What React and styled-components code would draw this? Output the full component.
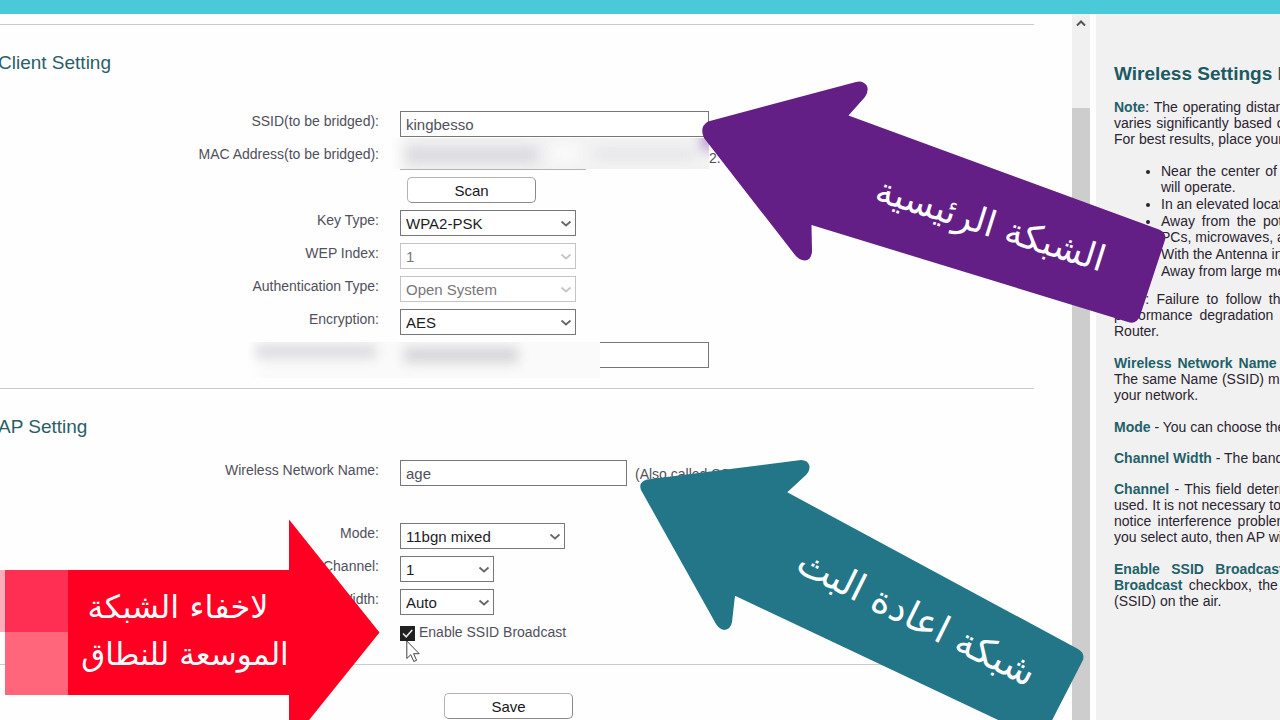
import React from 'react';
import styled, { createGlobalStyle } from 'styled-components';

const GlobalStyle = createGlobalStyle`
  * {
    box-sizing: border-box;
  }

  body {
    margin: 0;
    overflow: hidden;
    background: #fefefe;
    color: #50505c;
    font-family: "Liberation Sans", Arial, sans-serif;
    font-size: 14px;
    line-height: 20px;
  }
`;

const Page = styled.div`
  position: relative;
  display: flex;
  flex-direction: column;
  height: 100vh;
  overflow: hidden;
`;

const TopBar = styled.header`
  flex: none;
  height: 14px;
  background: #4ac9d8;
`;

const Frames = styled.div`
  display: flex;
  flex: 1;
  min-height: 0;
`;

const Content = styled.main`
  flex: 1;
  min-width: 0;
  margin-left: -2px;
  padding: 10px 38px 0 0;
`;

const Rule = styled.hr`
  height: 1px;
  margin: 0;
  border: 0;
  background: #cbcbcb;
`;

const Heading = styled.h2`
  margin: 0;
  padding-top: 26px;
  padding-bottom: ${({ $gap }) => $gap}px;
  color: #2a5f66;
  font-size: 19px;
  font-weight: normal;
  line-height: 24px;
`;

const Row = styled.div`
  position: relative;
  display: grid;
  grid-template-columns: 381px 1fr;
  column-gap: 21px;
  min-height: 33px;
  margin-bottom: ${({ $space }) => $space || 0}px;
`;

const Label = styled.label`
  text-align: right;
`;

const Field = styled.div`
  display: flex;
  align-items: flex-start;
`;

const TextInput = styled.input`
  width: ${({ $width }) => $width}px;
  height: 26px;
  padding: 0 5px;
  border: 1px solid ${({ $soft }) => ($soft ? '#b4b4b4' : '#777')};
  border-radius: 0;
  background: #fff;
  color: #50505c;
  font-family: inherit;
  font-size: 15px;
`;

const SelectBox = styled.div`
  position: relative;
  width: ${({ $width }) => $width}px;
  color: #666;

  select {
    width: 100%;
    height: 26px;
    padding: 0 22px 0 5px;
    appearance: none;
    border: 1px solid #777;
    border-radius: 0;
    background: #fff;
    color: #1c1c24;
    font-family: inherit;
    font-size: 15px;
  }

  select:disabled {
    border-color: #c4c4c4;
    color: #777;
    opacity: 1;
  }

  select:disabled + svg {
    color: #c4c4c4;
  }

  svg {
    position: absolute;
    top: 10px;
    right: 4px;
    pointer-events: none;
  }
`;

const Button = styled.button`
  width: 129px;
  height: 26px;
  margin-left: ${({ $indent }) => $indent}px;
  border: 1px solid #b4b4b4;
  border-right-color: #8a8a8a;
  border-bottom-color: #8a8a8a;
  border-radius: 5px;
  background: #fff;
  color: #16161c;
  font-family: inherit;
  font-size: 15px;
`;

const Hint = styled.span`
  padding-left: ${({ $gap }) => $gap || 8}px;
  line-height: 28px;
`;

const CheckBox = styled.span`
  position: relative;
  display: flex;
  padding-top: 4px;
  margin-right: 4px;

  input {
    width: 15px;
    height: 15px;
    margin: 0;
    appearance: none;
    background: #e8e8e8;
  }

  input:checked {
    background: #202020;
  }

  svg {
    position: absolute;
    top: 4px;
    left: 0;
    pointer-events: none;
  }
`;

const Redaction = styled.div`
  position: absolute;
  top: ${({ $top }) => $top}px;
  left: ${({ $left }) => $left}px;
  width: ${({ $width }) => $width}px;
  height: ${({ $height }) => $height}px;
  overflow: hidden;
  background: ${({ $background }) => $background};
`;

const Smudge = styled.span`
  position: absolute;
  top: ${({ $top }) => $top}px;
  left: ${({ $left }) => $left}px;
  width: ${({ $width }) => $width}px;
  height: ${({ $height }) => $height}px;
  background: ${({ $color }) => $color};
  filter: blur(6px);
`;

const Actions = styled.div`
  padding: 28px 0 0 446px;
`;

const ScrollBar = styled.div`
  display: flex;
  flex: none;
  flex-direction: column;
  width: 18px;
  background: #f0f0f0;
`;

const ScrollUp = styled.button`
  height: 17px;
  padding: 0;
  margin-bottom: 77px;
  border: 0;
  background: none;
  color: #555;
  line-height: 0;
`;

const ScrollThumb = styled.div`
  flex: 1;
  background: #cdcdcd;
`;

const Help = styled.aside`
  flex: none;
  width: 184px;
  margin-left: 6px;
  padding: 47px 0 0 18px;
  overflow: hidden;
  background: #f1f1f1;
  color: #2a2430;
`;

const HelpBody = styled.div`
  width: 419px;
  line-height: 16px;
  text-align: justify;

  h1 {
    margin: 0 0 13px;
    color: #1b5a63;
    font-size: 19px;
    line-height: 25px;
  }

  p {
    margin: 0 0 16px;
  }

  b {
    color: #1f6169;
  }

  ul {
    margin: 0 0 12px;
    padding-left: 47px;
  }

  li {
    margin-bottom: 1px;
  }
`;

const Tight = styled.p`
  && {
    margin-bottom: 15px;
  }
`;

const Annotation = styled.svg`
  position: absolute;
  top: ${({ $top }) => $top}px;
  left: ${({ $left }) => $left}px;
  overflow: visible;
  pointer-events: none;

  text {
    fill: #fff;
    font-family: "DejaVu Sans", sans-serif;
    text-anchor: middle;
    direction: rtl;
  }
`;

function Chevron({ up }) {
  return (
    <svg width="12" height="8" viewBox="0 0 12 8" fill="none" stroke="currentColor" strokeWidth={up ? 2 : 1.7}>
      <path d={up ? 'M2 6.5 6 2.5l4 4' : 'M1.5 1.5 6 5.5l4.5-4'} />
    </svg>
  );
}

function SelectRow({ id, label, value, width, disabled }) {
  return (
    <Row>
      <Label htmlFor={id}>{label}</Label>
      <Field>
        <SelectBox $width={width}>
          <select id={id} defaultValue={value} disabled={disabled}>
            <option>{value}</option>
          </select>
          <Chevron />
        </SelectBox>
      </Field>
    </Row>
  );
}

function ClientSetting() {
  return (
    <section>
      <Rule />
      <Heading $gap={36}>Client Setting</Heading>
      <Row>
        <Label htmlFor="ssid">SSID(to be bridged):</Label>
        <Field>
          <TextInput id="ssid" $width={309} defaultValue="kingbesso" />
        </Field>
      </Row>
      <Row>
        <Label htmlFor="mac">MAC Address(to be bridged):</Label>
        <Field>
          <TextInput id="mac" $width={186} $soft />
          <Hint $gap={123}>2.</Hint>
        </Field>
        <Redaction $top={-6} $left={392} $width={319} $height={31} $background="linear-gradient(90deg, #fefefe, #f3f3f4 20px)">
          <Smudge $top={8} $left={16} $width={132} $height={18} $color="#dcdce0" />
          <Smudge $top={6} $left={162} $width={26} $height={18} $color="#fafafa" />
          <Smudge $top={10} $left={205} $width={100} $height={12} $color="#e6e6e9" />
          <Smudge $top={-6} $left={312} $width={12} $height={18} $color="#b48fc8" />
        </Redaction>
      </Row>
      <Row>
        <span />
        <Field>
          <Button type="button" $indent={7}>Scan</Button>
        </Field>
      </Row>
      <SelectRow id="keyType" label="Key Type:" value="WPA2-PSK" width={176} />
      <SelectRow id="wepIndex" label="WEP Index:" value="1" width={176} disabled />
      <SelectRow id="authType" label="Authentication Type:" value="Open System" width={176} disabled />
      <SelectRow id="encryption" label="Encryption:" value="AES" width={176} />
      <Row $space={13}>
        <span />
        <Field>
          <TextInput type="password" aria-label="Password" $width={309} />
        </Field>
        <Redaction $top={0} $left={250} $width={352} $height={36} $background="linear-gradient(90deg, #fefefe, #fafafa 20px)">
          <Smudge $top={3} $left={8} $width={120} $height={13} $color="#dadae0" />
          <Smudge $top={5} $left={156} $width={114} $height={16} $color="#d6d6da" />
        </Redaction>
      </Row>
    </section>
  );
}

function ApSetting() {
  return (
    <section>
      <Rule />
      <Heading $gap={21}>AP Setting</Heading>
      <Row $space={30}>
        <Label htmlFor="networkName">Wireless Network Name:</Label>
        <Field>
          <TextInput id="networkName" $width={227} defaultValue="age" />
          <Hint>(Also called SSID)</Hint>
        </Field>
      </Row>
      <SelectRow id="mode" label="Mode:" value="11bgn mixed" width={165} />
      <SelectRow id="channel" label="Channel:" value="1" width={94} />
      <SelectRow id="channelWidth" label="Channel Width:" value="Auto" width={94} />
      <Row $space={9}>
        <span />
        <Field>
          <CheckBox>
            <input id="broadcast" type="checkbox" defaultChecked />
            <svg width="15" height="15" viewBox="0 0 15 15" fill="none" stroke="#e8e8e8" strokeWidth="1.6">
              <path d="M3 7.5 6.2 10.8 12.2 4" />
            </svg>
          </CheckBox>
          <label htmlFor="broadcast">Enable SSID Broadcast</label>
        </Field>
      </Row>
      <Rule />
      <Actions>
        <Button type="button" $indent={0}>Save</Button>
      </Actions>
    </section>
  );
}

function HelpPanel() {
  return (
    <Help>
      <HelpBody>
        <h1>Wireless Settings Help</h1>
        <p><b>Note</b>: The operating distance or range of your wireless connection varies significantly based on the physical placement of the Router. For best results, place your Router.</p>
        <ul>
          <li>Near the center of the area in which your wireless stations will operate.</li>
          <li>In an elevated location such as a high shelf.</li>
          <li>Away from the potential sources of interference, such as PCs, microwaves, and cordless phones.</li>
          <li>With the Antenna in the upright position.</li>
          <li>Away from large metal surfaces.</li>
        </ul>
        <p><b>Note</b>: Failure to follow these guidelines can result in significant performance degradation or inability to wirelessly connect to the Router.</p>
        <p><b>Wireless Network Name</b> - Enter a value of up to 32 characters. The same Name (SSID) must be assigned to all wireless devices in your network.</p>
        <Tight><b>Mode</b> - You can choose the appropriate "Mixed" mode.</Tight>
        <Tight><b>Channel Width</b> - The bandwidth of the wireless channel.</Tight>
        <p><b>Channel</b> - This field determines which operating frequency will be used. It is not necessary to change the wireless channel unless you notice interference problems with another nearby access point. If you select auto, then AP will choose the best channel automatically.</p>
        <p><b>Enable SSID Broadcast</b> - If you select the <b>Enable SSID Broadcast</b> checkbox, the wireless router will broadcast its name (SSID) on the air.</p>
      </HelpBody>
    </Help>
  );
}

function Annotations() {
  return (
    <>
      <Annotation $top={80} $left={700} width="468" height="244" viewBox="700 80 468 244">
        <path
          fill="#641f87"
          d="M708 121.5 856 82Q863 80 867 86 869 91 865 97L848.5 115.5 1159 229.5Q1167 233 1165 240L1140 316Q1136 325 1128 322L811.5 225 812 252Q811 260 805 260.5 799 260 795 255L704 138Q699 127 708 121.5Z"
        />
        <text transform="translate(987 236) rotate(17.5)" fontSize="36">الشبكة الرئيسية</text>
      </Annotation>
      <Annotation $top={459} $left={638} width="448" height="282" viewBox="638 459 448 282">
        <path
          fill="#237688"
          d="M647 479.5 801 460Q808 460 809.5 466 810 471 806 475L787.3 492.3 1078 649Q1085 653 1083 660L1045 734Q1040 741 1032 736L735 595.7 732 622Q731 629 724 630 719 629 716 624L641 490Q638 482 647 479.5Z"
        />
        <text transform="translate(911 629) rotate(26.5)" fontSize="38">شبكة اعادة البث</text>
      </Annotation>
      <Annotation $top={519} $left={0} width="380" height="226" viewBox="0 519 380 226">
        <path fill="#ffadb9" d="M0 570h5v62H0z" />
        <path fill="#ff2f54" d="M5 570h63v62H5z" />
        <path fill="#ff657b" d="M5 632h63v63H5z" />
        <path fill="#ff0022" d="M68 570H289V519.5L379.5 632.5 289 745V695H68z" />
        <text x="178" y="618" fontSize="32">لاخفاء الشبكة</text>
        <text x="185" y="665" fontSize="31">الموسعة للنطاق</text>
      </Annotation>
      <Annotation $top={640} $left={406} width="15" height="23" viewBox="0 0 15 23">
        <path
          fill="#fff"
          stroke="#444"
          strokeLinejoin="round"
          d="M.8 1v17.5l4-3.8 3 6.800 2.8-1.2-3-6.6h5.6z"
        />
      </Annotation>
    </>
  );
}

export default function App() {
  return (
    <Page>
      <GlobalStyle />
      <TopBar />
      <Frames>
        <Content>
          <ClientSetting />
          <ApSetting />
        </Content>
        <ScrollBar>
          <ScrollUp type="button" aria-label="Scroll up">
            <Chevron up />
          </ScrollUp>
          <ScrollThumb />
        </ScrollBar>
        <HelpPanel />
      </Frames>
      <Annotations />
    </Page>
  );
}
